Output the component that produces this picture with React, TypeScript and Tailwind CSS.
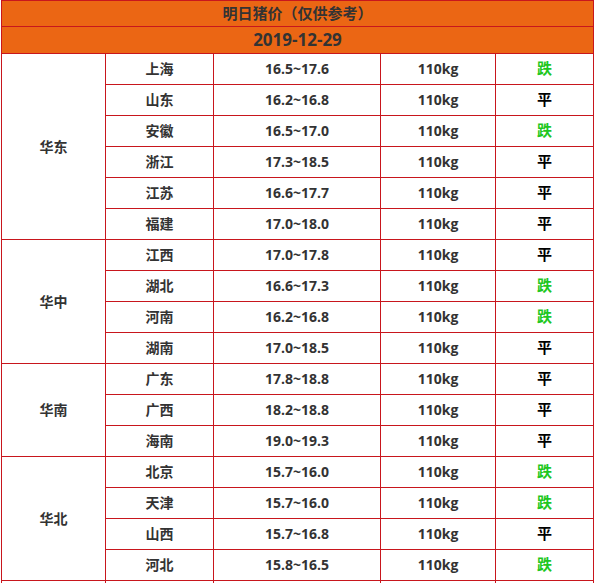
import React from "react";

type Row = { city: string; price: string; weight: string; trend: "跌" | "平" | "" };
type Group = { region: string; rows: Row[] };

const groups: Group[] = [
  {
    region: "华东",
    rows: [
      { city: "上海", price: "16.5~17.6", weight: "110kg", trend: "跌" },
      { city: "山东", price: "16.2~16.8", weight: "110kg", trend: "平" },
      { city: "安徽", price: "16.5~17.0", weight: "110kg", trend: "跌" },
      { city: "浙江", price: "17.3~18.5", weight: "110kg", trend: "平" },
      { city: "江苏", price: "16.6~17.7", weight: "110kg", trend: "平" },
      { city: "福建", price: "17.0~18.0", weight: "110kg", trend: "平" },
    ],
  },
  {
    region: "华中",
    rows: [
      { city: "江西", price: "17.0~17.8", weight: "110kg", trend: "平" },
      { city: "湖北", price: "16.6~17.3", weight: "110kg", trend: "跌" },
      { city: "河南", price: "16.2~16.8", weight: "110kg", trend: "跌" },
      { city: "湖南", price: "17.0~18.5", weight: "110kg", trend: "平" },
    ],
  },
  {
    region: "华南",
    rows: [
      { city: "广东", price: "17.8~18.8", weight: "110kg", trend: "平" },
      { city: "广西", price: "18.2~18.8", weight: "110kg", trend: "平" },
      { city: "海南", price: "19.0~19.3", weight: "110kg", trend: "平" },
    ],
  },
  {
    region: "华北",
    rows: [
      { city: "北京", price: "15.7~16.0", weight: "110kg", trend: "跌" },
      { city: "天津", price: "15.7~16.0", weight: "110kg", trend: "跌" },
      { city: "山西", price: "15.7~16.8", weight: "110kg", trend: "平" },
      { city: "河北", price: "15.8~16.5", weight: "110kg", trend: "跌" },
    ],
  },
  // next group starts just below the visible area
  {
    region: "",
    rows: [{ city: "", price: "", weight: "", trend: "" }],
  },
];

const font = { fontFamily: '"Open Sans", "Noto Sans CJK SC", sans-serif' };
const cell = "border border-[#c8161d] text-center align-middle h-[31px] p-0 font-bold text-[14px] text-[#333]";

export default function App() {
  return (
    <div className="w-[596px] h-[583px] overflow-hidden bg-white" style={font}>
      <table className="ml-px w-[592px] table-fixed border-collapse">
        <colgroup>
          <col className="w-[104px]" />
          <col className="w-[108px]" />
          <col className="w-[167px]" />
          <col className="w-[115px]" />
          <col className="w-[98px]" />
        </colgroup>
        <thead>
          <tr>
            <th colSpan={5} className="border border-[#c8161d] bg-[#eb6614] h-[26px] p-0 text-[15px] font-bold text-[#333]">
              明日猪价（仅供参考）
            </th>
          </tr>
          <tr>
            <th colSpan={5} className="border border-[#c8161d] border-b-0 bg-[#eb6614] h-[26px] p-0 text-[17px] font-bold text-[#333]">
              2019-12-29
            </th>
          </tr>
        </thead>
        <tbody>
          {groups.map((g, gi) =>
            g.rows.map((r, i) => (
              <tr key={gi + "-" + i}>
                {i === 0 && (
                  <td rowSpan={g.rows.length} className={cell}>
                    {g.region}
                  </td>
                )}
                <td className={cell}>{r.city}</td>
                <td className={cell}>{r.price}</td>
                <td className={cell}>{r.weight}</td>
                <td className={`${cell} text-[15px] ${r.trend === "跌" ? "!text-[#1fc71f]" : "!text-black"}`}>{r.trend}</td>
              </tr>
            ))
          )}
        </tbody>
      </table>
    </div>
  );
}
